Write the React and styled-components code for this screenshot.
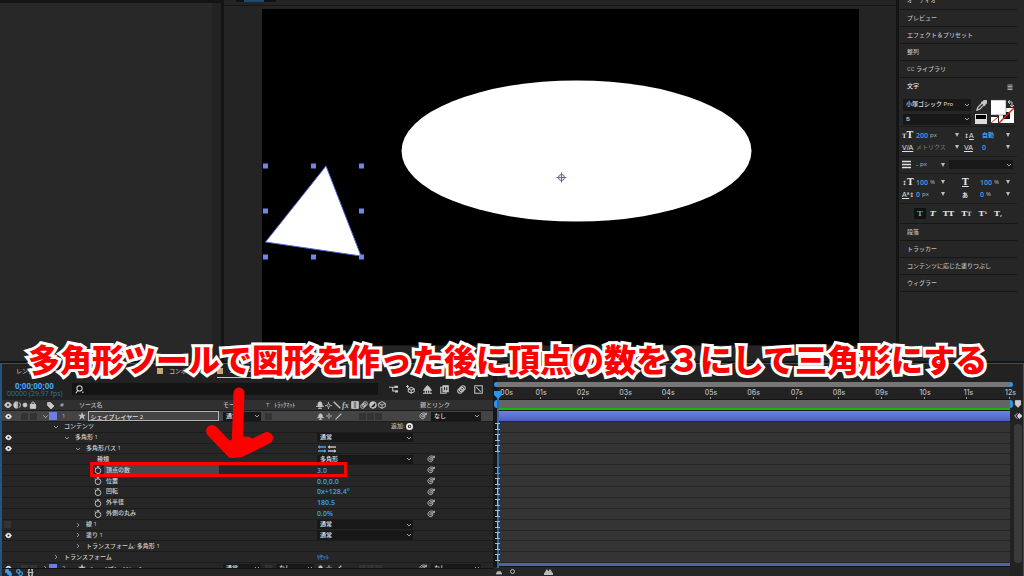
import React from "react"
import styled, { createGlobalStyle } from "styled-components"

const colors = {
  bg: "#141414",
  panel: "#262626",
  panelDark: "#222222",
  field: "#181818",
  line: "#161616",
  text: "#bcbcbc",
  bright: "#e0e0e0",
  dim: "#6c6c6c",
  blue: "#3fa0ec",
  frame: "#27547f",
  red: "#ff0000"
}

const GlobalStyle = createGlobalStyle`
  * {
    box-sizing: border-box;
  }
  body {
    margin: 0;
    background: ${colors.bg};
    color: ${colors.text};
    font-family: "Open Sans", "Noto Sans CJK JP", sans-serif;
    font-size: 6px;
    font-weight: 500;
    line-height: 9px;
    overflow: hidden;
  }
  button,
  input,
  select {
    margin: 0;
    padding: 0;
    border: 0;
    border-radius: 0;
    background: none;
    color: inherit;
    font: inherit;
  }
  svg {
    display: block;
    flex: none;
  }
`

const App = styled.div`
  position: relative;
  display: flex;
  flex-direction: column;
  height: 100vh;
  overflow: hidden;
`

const Workspace = styled.main`
  display: flex;
  flex: 1;
  min-height: 0;
  gap: 3px;
  padding-bottom: 2px;
`

/* ---------- icons ---------- */

const paths = {
  eye: (
    <>
      <path d="M1 6c2-5 8-5 10 0-2 5-8 5-10 0z" fill="currentColor" />
      <circle cx="6" cy="6" r="2.2" fill="#1c1c1c" />
    </>
  ),
  audio: (
    <>
      <path d="M5 1v10C0 10 0 2 5 1z" fill="currentColor" />
      <path d="M7 1v10M9 2c3 2 3 6 0 8" />
    </>
  ),
  dot: <circle cx="6" cy="6" r="4" fill="currentColor" />,
  lock: (
    <>
      <path d="M2 5h8v6H2z" fill="currentColor" />
      <path d="M4 5V3c0-2 4-2 4 0v2" />
    </>
  ),
  tag: (
    <>
      <path d="M1 1h5l6 6-5 5-6-6z" fill="currentColor" />
      <circle cx="3.5" cy="3.5" r="1" fill="#222" />
    </>
  ),
  star: (
    <path
      d="M6 0l1.700 4H12L8.600 6.700 10 11.500 6 8.600 2 11.500 3.400 6.700 0 4h4.300z"
      fill="currentColor"
      stroke="none"
    />
  ),
  down: <path d="M2 4l4 4 4-4" />,
  right: <path d="M4 2l4 4-4 4" />,
  triangle: <path d="M2 2h8L6 10z" fill="currentColor" stroke="none" />,
  stopwatch: (
    <>
      <circle cx="6" cy="7" r="4.300" />
      <path d="M4 1h4M6 1v2M1 2l2 2" />
    </>
  ),
  spiral: (
    <path d="M6 6c1-1 2 1 .5 1.500C4 8 3 5 5.500 4 9 3 10 8 7 9.700 3 11 0 7 2 4c2-3 7-3.500 9-.5M11 1v3H8" />
  ),
  shy: (
    <>
      <path d="M3 8V5c0-5 6-5 6 0v3z" fill="currentColor" />
      <path d="M0 8h12M6 8v4M3 11h6" />
    </>
  ),
  sun: (
    <>
      <circle cx="6" cy="6" r="2.500" />
      <path d="M6 0v3M6 9v3M0 6h3M9 6h3" />
    </>
  ),
  back: <path d="M1 1l10 10" strokeWidth="2" />,
  slash: <path d="M1 11L11 1" strokeWidth="2" />,
  film: (
    <>
      <path d="M1 1h10v10H1z" fill="currentColor" />
      <path d="M4 3h4M4 9h4M4 6h4" stroke="#333" />
    </>
  ),
  blur: (
    <>
      <circle cx="4" cy="8" r="3" />
      <circle cx="6" cy="6" r="3" />
      <circle cx="8" cy="4" r="3" />
    </>
  ),
  half: (
    <>
      <circle cx="6" cy="6" r="5" fill="currentColor" />
      <path d="M3 9l6-6c2 3-2 8-6 6z" fill="#222" stroke="none" />
    </>
  ),
  cube: <path d="M6 1l5 2.500v5L6 11 1 8.500v-5zM1 3.500L6 6l5-2.500M6 6v5" />,
  flow: (
    <>
      <path d="M0 3h7M5 3v5h3" />
      <path d="M7 1h5v3H7zM8 7h4v3H8z" fill="currentColor" stroke="none" />
    </>
  ),
  draft: (
    <>
      <path d="M0 2h4M2 0v4" />
      <path d="M7 3l4 2v4l-4 2-4-2V5zM3 5l4 2 4-2M7 7v4" />
    </>
  ),
  hide: (
    <>
      <path d="M0 11h12M1 7h10L9 4 6 1 3 4z" fill="currentColor" />
      <path d="M3 7v4M6 7v4M9 7v4" />
    </>
  ),
  frames: (
    <>
      <path d="M1 3h7v8H1z" />
      <path d="M4 1h7v8H4z" fill="currentColor" />
      <path d="M6 3v4M9 3v4" stroke="#222" />
    </>
  ),
  graph: <path d="M1 1h10v10H1zM3 3l6 6" />,
  plus: (
    <>
      <circle cx="6" cy="6" r="4.500" fill="#222" strokeWidth="3" />
      <path d="M5 4l3 2-3 2z" fill="currentColor" stroke="none" />
    </>
  ),
  search: (
    <>
      <circle cx="6" cy="4.500" r="3.500" />
      <path d="M4 7l-3 4" />
      <path d="M9 9h3l-1.500 2z" fill="currentColor" stroke="none" />
    </>
  ),
  direction: (
    <>
      <path d="M0 3h12M0 9h12" strokeWidth="2" />
      <path d="M3 0v6L0 3zM9 6v6l3-3z" fill="currentColor" stroke="none" />
    </>
  ),
  marker: <path d="M2 1h8v6l-4 4-4-4z" fill="currentColor" />,
  diamond: (
    <>
      <path d="M5 2L1 6l4 4" />
      <path d="M8 2l4 4-4 4-3-4z" fill="currentColor" />
    </>
  ),
  layers: <path d="M1 1h5v5H1zM4 4h5v5H4zM7 7h4v4H7z" fill="currentColor" />,
  links: (
    <>
      <circle cx="4" cy="4" r="3" strokeWidth="2" />
      <circle cx="8" cy="8" r="3" strokeWidth="2" />
    </>
  ),
  braces: <path d="M5 1H3v10h2M7 1h2v10H7M1 6h10" strokeWidth="2" />,
  mountain: <path d="M0 10l4-6 2 3 2-3 4 6z" fill="currentColor" />,
  menu: <path d="M1 2h10M1 5h10M1 8h10M1 11h10" />,
  lines: <path d="M0 2h12M0 6h12M0 10h12" strokeWidth="2" />,
  dropper: (
    <>
      <path d="M1 11l1-3 5-5 2 2-5 5z" />
      <path d="M6 2l4 4M7 3l3-3 2 2-3 3z" fill="currentColor" strokeWidth="2" />
    </>
  )
}

function Icon({ name, size = 8, color }) {
  return (
    <svg
      width={size}
      height={size}
      viewBox="0 0 12 12"
      fill="none"
      stroke="currentColor"
      strokeWidth="1.4"
      color={color}
      aria-hidden="true"
    >
      {paths[name]}
    </svg>
  )
}

/* ---------- shared controls ---------- */

const IconButton = styled.button`
  display: flex;
  align-items: center;
  justify-content: center;
  width: ${({ $width }) => $width || 8}px;
  height: ${({ $height }) => $height || 8}px;
  color: ${({ $color }) => $color || "#c4c4c4"};
`

const SelectBox = styled.span`
  position: relative;
  display: flex;
  align-items: center;
  flex: ${({ $width }) => ($width ? "none" : 1)};
  width: ${({ $width }) => ($width ? `${$width}px` : "auto")};
  min-width: 0;
  height: ${({ $tall }) => ($tall ? 11 : 9)}px;
  background: ${colors.field};
  color: ${colors.bright};
  font-weight: 500;
  select {
    width: 100%;
    height: 100%;
    padding-left: 3px;
    appearance: none;
  }
  svg {
    position: absolute;
    right: 1px;
    pointer-events: none;
  }
`

function Select({ label, value, ...rest }) {
  return (
    <SelectBox {...rest}>
      <select aria-label={label} defaultValue={value}>
        <option>{value}</option>
      </select>
      <Icon name="down" size={6} />
    </SelectBox>
  )
}

const Value = styled.input`
  width: ${({ $width }) => $width}px;
  height: 9px;
  color: ${({ $dim }) => ($dim ? colors.dim : colors.blue)};
  font-size: ${({ $jp }) => ($jp ? 6 : 7)}px;
  font-weight: ${({ $dim }) => ($dim ? 500 : 600)};
`

/* ---------- upper left and viewer ---------- */

const ProjectPanel = styled.section`
  flex: 0 0 221px;
  margin-top: 3px;
  border-right: 9px solid #232323;
  background: #282828;
`

const Viewer = styled.section`
  display: flex;
  flex: 1;
  flex-direction: column;
  min-width: 0;
  background: #242424;
`

const ViewerTabs = styled.div`
  height: 6px;
  padding-left: 12px;
  border-bottom: 1px solid ${colors.line};
`

const ViewerTab = styled.div`
  width: 40px;
  height: 2px;
  background: linear-gradient(90deg, #111 20%, #1c4a6e 20%, #1c4a6e 70%, #111 70%);
`

const Stage = styled.div`
  display: flex;
  flex: 1;
  align-items: flex-start;
  justify-content: center;
  padding: 3px 0 0 1px;
  border-bottom: 1px solid ${colors.line};
  svg {
    background: #000;
  }
`

const ViewerFooter = styled.div`
  height: 15px;
`

const handles = [3.5, 51.5, 99.5].flatMap(x =>
  [157, 202, 248].filter(y => !(x === 51.5 && y === 202)).map(y => [x, y])
)

function Composition() {
  return (
    <Stage>
      <svg width="597" height="336" viewBox="0 0 597 336" role="img" aria-label="コンポジション">
        <ellipse cx="314.500" cy="142" rx="175" ry="70.500" fill="#fff" />
        <path d="M64 157L3.500 233 99 247z" fill="#fff" stroke="#5468d8" />
        {handles.map(([x, y]) => (
          <rect key={`${x}-${y}`} x={x - 2.5} y={y - 2.5} width="5" height="5" fill="#6f86ee" />
        ))}
        <g stroke="#5a639c" fill="none">
          <circle cx="299.500" cy="168.500" r="3" />
          <path d="M299.500 163.500v10M294.500 168.500h10" />
        </g>
      </svg>
    </Stage>
  )
}

/* ---------- right side panels ---------- */

const SidePanels = styled.aside`
  flex: 0 0 125px;
  padding: 0 7px 0 1px;
  background: ${colors.panel};
`

const PanelHeader = styled.button`
  display: flex;
  align-items: ${({ $cut }) => ($cut ? "flex-end" : "center")};
  justify-content: space-between;
  width: 100%;
  height: ${({ $cut }) => ($cut ? 10 : 17)}px;
  padding: ${({ $cut }) => ($cut ? "0 4px 4px 7px" : "0 4px 0 7px")};
  border-bottom: ${({ $open }) => ($open ? 0 : 1)}px solid ${colors.line};
  color: ${({ $open }) => ($open ? colors.bright : colors.text)};
`

const CharacterPanel = styled.div`
  border-bottom: 1px solid ${colors.line};
`

const FontBlock = styled.div`
  display: grid;
  grid-template-columns: 68px 12px 26px;
  column-gap: 4px;
  padding: 4px 0 1px 3px;
`

const Stack = styled.div`
  display: flex;
  flex-direction: column;
  gap: 3px;
`

const Group = styled.div`
  padding: 2px 4px 3px 2px;
  border-top: 1px solid #1b1b1b;
`

const CharRow = styled.div`
  display: grid;
  grid-template-columns: 14px ${({ $near }) => ($near ? "24px 22px" : "38px 10px")} 18px 1fr 8px;
  align-items: center;
  height: 12px;
`

const Field = styled.label`
  display: flex;
  align-items: center;
  gap: 1px;
  font-size: 6px;
`

const Glyph = styled.span`
  color: ${colors.bright};
  font-family: "DejaVu Serif", "Noto Sans CJK JP", serif;
  font-size: 9px;
  font-weight: bold;
  line-height: 11px;
  white-space: nowrap;
  small {
    font-size: 6px;
  }
  sub {
    font: 7px/6px "Liberation Sans", sans-serif;
    text-decoration: underline;
    vertical-align: baseline;
  }
  u {
    text-underline-offset: 1px;
  }
`

const StrokeRow = styled.div`
  display: grid;
  grid-template-columns: 14px 24px 9px 1fr;
  align-items: center;
  height: 11px;
`

const StyleRow = styled.div`
  display: flex;
  align-items: center;
  justify-content: space-between;
  height: 14px;
  padding: 0 8px 0 12px;
`

const StyleButton = styled.button`
  height: 11px;
  padding: 0 3px;
  background: ${({ $on }) => ($on ? "#111" : "none")};
  color: ${({ $on }) => ($on ? colors.blue : colors.bright)};
  font: bold 8px/11px "DejaVu Serif", serif;
  font-style: ${({ $italic }) => ($italic ? "italic" : "normal")};
  small {
    font-size: 6px;
  }
`

const characterRows = [
  [
    { icon: <><small>T</small>T</>, value: "200", unit: "px", label: "フォントサイズ", width: 13 },
    { icon: <><small>↕</small><sub>A</sub></>, value: "自動", label: "行送り", width: 16, jp: true }
  ],
  [
    { icon: <sub>V/A</sub>, value: "メトリクス", label: "カーニング", width: 34, dim: true, jp: true },
    { icon: <sub>VA</sub>, value: "0", label: "トラッキング", width: 12 }
  ]
]

const scaleRows = [
  [
    { icon: <><small>↕</small>T</>, value: "100", unit: "%", label: "垂直比率", width: 13 },
    { icon: <u>T</u>, value: "100", unit: "%", label: "水平比率", width: 13 }
  ],
  [
    { icon: <><sub>Aª</sub><small>↕</small></>, value: "0", unit: "px", label: "ベースラインシフト", width: 5 },
    { icon: <small>あ</small>, value: "0", unit: "%", label: "文字詰め", width: 5 }
  ]
]

function CharacterRow({ items, near }) {
  return (
    <CharRow $near={near}>
      {items.map(item => (
        <React.Fragment key={item.label}>
          <Glyph>{item.icon}</Glyph>
          <Field>
            <Value
              aria-label={item.label}
              defaultValue={item.value}
              $width={item.width}
              $dim={item.dim}
              $jp={item.jp}
            />
            {item.unit}
          </Field>
          <Icon name="triangle" size={6} />
        </React.Fragment>
      ))}
    </CharRow>
  )
}

function Character() {
  return (
    <CharacterPanel>
      <PanelHeader $open>
        文字
        <Icon name="menu" size={6} />
      </PanelHeader>
      <FontBlock>
        <Stack>
          <Select $tall label="フォント" value="小塚ゴシック Pro" />
          <Select $tall label="スタイル" value="B" />
        </Stack>
        <Stack>
          <IconButton aria-label="スポイト" $width={12} $height={12}>
            <Icon name="dropper" size={11} />
          </IconButton>
          <svg width="12" height="10" viewBox="0 0 12 10">
            <path d="M0 0h12v10H0z" fill="#ddd" />
            <path d="M1 1h10v4H1z" fill="#000" />
          </svg>
        </Stack>
        <svg width="26" height="26" viewBox="2 0 26 26" aria-label="塗りと線">
          <path d="M10 9h15v15H10z" fill="#fff" />
          <path d="M14 13h7v7h-7z" fill="#111" />
          <path d="M10 24L25 9" stroke="#d22" strokeWidth="1.500" />
          <path d="M1 1h16v15H1z" fill="#fff" stroke="#444" strokeWidth=".5" />
          <path d="M2 18h7v6H2z" fill="#fff" />
          <path d="M2 24l7-6" stroke="#d22" />
          <path d="M19 3h4v5M21 1l-2 2 2 2M21 6l2 2 2-2" fill="none" stroke="#ccc" />
        </svg>
      </FontBlock>
      <Group>
        {characterRows.map((items, i) => (
          <CharacterRow key={i} items={items} />
        ))}
      </Group>
      <Group>
        <StrokeRow>
          <Icon name="lines" size={9} color={colors.bright} />
          <Field>
            <Value aria-label="線幅" defaultValue="-" $width={3} />
            px
          </Field>
          <Icon name="triangle" size={6} />
          <Select label="線の重なり" value="" />
        </StrokeRow>
      </Group>
      <Group>
        {scaleRows.map((items, i) => (
          <CharacterRow key={i} items={items} near />
        ))}
      </Group>
      <Group>
        <StyleRow>
          <StyleButton $on>T</StyleButton>
          <StyleButton $italic>T</StyleButton>
          <StyleButton>TT</StyleButton>
          <StyleButton>T<small>T</small></StyleButton>
          <StyleButton>T<small>¹</small></StyleButton>
          <StyleButton>T<small>,</small></StyleButton>
        </StyleRow>
      </Group>
    </CharacterPanel>
  )
}

/* ---------- timeline ---------- */

const Timeline = styled.section`
  display: flex;
  flex: 0 0 213px;
  min-height: 0;
  border: 1px solid ${colors.frame};
  border-left-width: 2px;
  border-bottom: 0;
  background: ${colors.panelDark};
`

const LayerSide = styled.div`
  display: flex;
  flex: 0 0 491px;
  flex-direction: column;
  min-height: 0;
`

const Tabs = styled.div`
  display: flex;
  flex: 0 0 14px;
  align-items: center;
  gap: 8px;
  padding-left: 14px;
`

const Tab = styled.button`
  display: flex;
  align-items: center;
  gap: 6px;
  width: ${({ $width }) => $width}px;
  height: 14px;
  border-bottom: ${({ $active }) => ($active ? 1 : 0)}px solid #c4c4c4;
  white-space: nowrap;
  overflow: hidden;
  &::before {
    content: "";
    flex: none;
    width: 6px;
    height: 6px;
    background: #c2a878;
    display: ${({ $plain }) => ($plain ? "none" : "block")};
  }
`

const Toolbar = styled.div`
  display: flex;
  flex: 0 0 22px;
  align-items: center;
  padding-left: 5px;
`

const Timecode = styled.div`
  flex: 0 0 65px;
  color: #2772ac;
  font-size: 7px;
  line-height: 8px;
  white-space: nowrap;
  strong {
    display: block;
    padding-left: 8px;
    color: #3fa5f5;
    font-size: 8px;
    line-height: 9px;
  }
`

const Search = styled.label`
  display: flex;
  flex: 0 0 306px;
  align-items: center;
  height: 12px;
  padding-left: 3px;
  background: #141414;
  color: #d0d0d0;
  input {
    flex: 1;
  }
`

const Tools = styled.div`
  display: flex;
  flex: 1;
  justify-content: space-between;
  padding: 0 9px 0 10px;
`

const RowGrid = styled.div`
  display: grid;
  grid-template-columns: 36px 184px 94px 100px 1fr;
  align-items: center;
  min-height: 0;
`

const HeaderRow = styled(RowGrid)`
  flex: 0 0 11px;
  border-bottom: 1px solid #1c1c1c;
  background: #303030;
  white-space: nowrap;
`

const Row = styled(RowGrid)`
  border-bottom: 1px solid #1c1c1c;
  background: ${({ $layer }) => ($layer ? "#444444" : colors.panel)};
`

const Cell = styled.div`
  display: flex;
  align-items: center;
  height: 100%;
  gap: ${({ $gap }) => $gap || 0}px;
  padding-left: ${({ $indent }) => $indent || 0}px;
  white-space: nowrap;
`

const RowsView = styled.div`
  flex: 1;
  min-height: 0;
  overflow: visible clip;
`

/* both sides of the timeline share the same row rhythm */
const Rows = styled.div`
  display: grid;
  grid-template-rows: repeat(15, 1fr);
  height: 163px;
`

const Box = styled.span`
  width: 7px;
  height: 7px;
  background: #333333;
`

const Swatch = styled.span`
  width: 8px;
  height: 8px;
  background: #6b7fe0;
`

const Spacer = styled.span`
  width: ${({ $width }) => $width}px;
`

const LayerName = styled.input`
  width: ${({ $plain }) => ($plain ? 120 : 131)}px;
  height: 10px;
  padding-left: 1px;
  border: ${({ $plain }) => ($plain ? 0 : 1)}px solid #b4b4b4;
  color: ${colors.bright};
`

const Name = styled.span`
  display: flex;
  align-items: center;
  flex: 1;
  height: 100%;
  margin-right: 3px;
  padding-left: 2px;
  background: ${({ $selected }) => ($selected ? "#484848" : "none")};
  color: #d0d0d0;
`

const ResetLink = styled.a`
  color: ${colors.blue};
  font-size: 6px;
  text-decoration: none;
`

const BottomBar = styled.div`
  display: flex;
  flex: 0 0 8px;
  align-items: center;
  gap: 3px;
  padding-left: 2px;
  border-top: 1px solid #111;
  background: #262626;
`

const properties = [
  { name: "コンテンツ", indent: 14, icon: "down", add: true },
  { name: "多角形 1", indent: 25, icon: "down", eye: true, select: "通常" },
  { name: "多角形パス 1", indent: 36, icon: "down", eye: true, direction: true },
  { name: "種類", indent: 47, select: "多角形", link: true },
  { name: "頂点の数", indent: 56, icon: "stopwatch", value: "3.0", link: true, selected: true },
  { name: "位置", indent: 56, icon: "stopwatch", value: "0.0,0.0", link: true },
  { name: "回転", indent: 56, icon: "stopwatch", value: "0x+128.4°", link: true },
  { name: "外半径", indent: 56, icon: "stopwatch", value: "180.5", link: true },
  { name: "外側の丸み", indent: 56, icon: "stopwatch", value: "0.0%", link: true },
  { name: "線 1", indent: 36, icon: "right", hidden: true, select: "通常" },
  { name: "塗り 1", indent: 36, icon: "right", eye: true, select: "通常" },
  { name: "トランスフォーム: 多角形 1", indent: 36, icon: "right" },
  { name: "トランスフォーム", indent: 14, icon: "right", reset: true }
]

function LayerRow({ number, name, open }) {
  return (
    <Row $layer={open}>
      <Cell $gap={2} $indent={2}>
        <IconButton aria-label="表示" $color="#eee"><Icon name="eye" size={7} /></IconButton>
        <Spacer $width={5} />
        <Box />
        <Box />
      </Cell>
      <Cell $indent={3}>
        <IconButton aria-label="展開"><Icon name={open ? "down" : "right"} size={7} /></IconButton>
        <Swatch />
        <Spacer $width={5} />
        {number}
        <Spacer $width={13} />
        <Icon name="star" />
        <Spacer $width={2} />
        <LayerName aria-label="レイヤー名" defaultValue={name} $plain={!open} />
      </Cell>
      <Cell $indent={1} $gap={4}>
        <Select $width={38} label="モード" value="通常" />
        <Box />
        {!open && <Select $width={38} label="トラックマット" value="なし" />}
      </Cell>
      <Cell $gap={1}>
        <IconButton aria-label="シャイ"><Icon name="shy" size={7} /></IconButton>
        <IconButton aria-label="コラップス"><Icon name="sun" size={6} /></IconButton>
        <IconButton aria-label="画質"><Icon name="slash" size={7} /></IconButton>
        <Spacer $width={15} />
        <Box />
        <Box />
        <Box />
      </Cell>
      <Cell $indent={3} $gap={4}>
        <IconButton aria-label="ピックウイップ"><Icon name="spiral" /></IconButton>
        <Select $width={50} label="親とリンク" value="なし" />
      </Cell>
    </Row>
  )
}

function PropertyRow({ item }) {
  return (
    <Row>
      <Cell $indent={2}>
        {item.eye && <IconButton aria-label="表示" $color="#eee"><Icon name="eye" size={7} /></IconButton>}
        {item.hidden && <Box />}
      </Cell>
      <Cell $indent={item.indent} $gap={2}>
        {item.icon ? (
          <IconButton aria-label={item.name}>
            <Icon name={item.icon} size={item.icon === "stopwatch" ? 8 : 6} />
          </IconButton>
        ) : (
          <Spacer $width={8} />
        )}
        <Name $selected={item.selected}>{item.name}</Name>
      </Cell>
      <Cell />
      <Cell $indent={1}>
        {item.select && <Select $width={96} label={item.name} value={item.select} />}
        {item.value && <Value aria-label={item.name} defaultValue={item.value} $width={60} />}
        {item.reset && <ResetLink href="#reset">ﾘｾｯﾄ</ResetLink>}
        {item.direction && (
          <>
            <IconButton aria-label="パスの方向" $width={10} $color={colors.blue}><Icon name="direction" /></IconButton>
            <IconButton aria-label="逆方向" $width={10}><Icon name="direction" /></IconButton>
          </>
        )}
        {item.add && (
          <>
            <Spacer $width={74} />
            追加:
            <IconButton aria-label="追加" $width={10} $color="#eee"><Icon name="plus" size={7} /></IconButton>
          </>
        )}
      </Cell>
      <Cell $indent={11}>
        {item.link && <IconButton aria-label="リンク"><Icon name="spiral" /></IconButton>}
      </Cell>
    </Row>
  )
}

const TimeSide = styled.div`
  position: relative;
  display: flex;
  flex: 1;
  flex-direction: column;
  min-width: 0;
  min-height: 0;
  padding-left: 5px;
  background:
    linear-gradient(90deg, #161616 4px, transparent 4px),
    ${colors.panelDark};
`

const Navigator = styled.div`
  flex: none;
  height: ${({ $thick }) => ($thick ? 8 : 5)}px;
  margin: ${({ $thick }) => ($thick ? "0 -3px 0 -4px" : "18px -3px 0 -4px")};
  border: 3px solid #2f93e8;
  border-width: 0 3px;
  border-radius: 3px;
  background: ${({ $thick }) => ($thick ? "#646464" : "#777575")};
`

const Ruler = styled.div`
  display: grid;
  grid-template-columns: repeat(12, 1fr);
  flex: 0 0 13px;
  border-bottom: 1px solid #111;
  font-family: Inter, sans-serif;
  font-size: 7px;
`

const Second = styled.span`
  position: relative;
  padding-top: 1px;
  border-right: 1px solid transparent;
  span {
    position: absolute;
    right: -7px;
  }
  &::after {
    content: "";
    position: absolute;
    right: -1px;
    bottom: 0;
    width: 1px;
    height: 2px;
    background: #999;
  }
`

const FirstSecond = styled.b`
  font-weight: 500;
`

const CacheBar = styled.div`
  flex: 0 0 3px;
  border-bottom: 1px solid #1c1c1c;
  background: #12b812;
`

const Track = styled.div`
  display: flex;
  align-items: center;
  border-bottom: 1px solid #272727;
  background: ${({ $bar, $muted }) =>
    $muted ? "#5561a0" : $bar ? "linear-gradient(#7383dc, #4760c6)" : "#343434"};
`

const Beam = styled.span`
  z-index: 1;
  width: 5px;
  height: 7px;
  margin-left: -3px;
  border: 1px solid ${({ $active }) => ($active ? colors.blue : "#b0b8c0")};
  border-width: 1px 0;
  background: linear-gradient(
    90deg,
    transparent 2px,
    ${({ $active }) => ($active ? colors.blue : "#b0b8c0")} 2px,
    ${({ $active }) => ($active ? colors.blue : "#b0b8c0")} 3px,
    transparent 3px
  );
`

const Playhead = styled.div`
  position: absolute;
  top: 27px;
  bottom: 8px;
  left: 4px;
  width: 2px;
  background: #2a6aa6;
  svg {
    margin-left: -3px;
  }
`

const ZoomBar = styled(BottomBar)`
  margin-left: -5px;
  padding-left: 3px;
  gap: 1px;
  input {
    width: 40px;
    height: 6px;
    appearance: none;
  }
  input::-webkit-slider-thumb {
    appearance: none;
    width: 5px;
    height: 5px;
    border: 1px solid #bbb;
    border-radius: 50%;
  }
`

const ScrollColumn = styled.div`
  display: flex;
  flex: 0 0 13px;
  flex-direction: column;
  align-items: flex-end;
  gap: 4px;
  padding: 36px 1px 13px 0;
  background: ${colors.panelDark};
  color: #cccccc;
`

const Thumb = styled.div`
  flex: 1;
  width: 8px;
  border-radius: 4px;
  background: #3a3a3a;
`

const seconds = ["01s", "02s", "03s", "04s", "05s", "06s", "07s", "08s", "09s", "10s", "11s", "12s"]

function TimeGraph() {
  return (
    <TimeSide>
      <Navigator />
      <Ruler>
        {seconds.map((label, i) => (
          <Second key={label}>
            {i === 0 && <FirstSecond>:00s</FirstSecond>}
            <span>{label}</span>
          </Second>
        ))}
      </Ruler>
      <Navigator $thick />
      <CacheBar />
      <RowsView>
        <Rows>
          <Track $bar />
          {properties.map(item => (
            <Track key={item.name}>
              {item.name !== "種類" && <Beam $active={item.selected} />}
            </Track>
          ))}
          <Track $muted />
        </Rows>
      </RowsView>
      <ZoomBar>
        <Icon name="mountain" size={6} />
        <input type="range" aria-label="ズーム" min="0" max="100" defaultValue="20" />
        <Icon name="mountain" size={9} />
      </ZoomBar>
      <Playhead>
        <svg width="8" height="8" viewBox="0 0 8 8">
          <path d="M0 0h8v4L4 8 0 4z" fill="#2f93e8" />
        </svg>
      </Playhead>
    </TimeSide>
  )
}

const switchIcons = ["shy", "sun", "back", "fx", "film", "blur", "half", "cube"]

const Fx = styled.i`
  width: 8px;
  font: italic bold 8px/9px "Liberation Serif", serif;
`

function Layers() {
  return (
    <LayerSide>
      <Tabs>
        <Tab $plain $width={133}>レンダーキュー</Tab>
        <Tab $width={52}>コンポ 1</Tab>
        <Tab $width={46} $active>コンポ 2</Tab>
      </Tabs>
      <Toolbar>
        <Timecode>
          <strong>0;00;00;00</strong>
          00000 (29.97 fps)
        </Timecode>
        <Search>
          <Icon name="search" size={9} />
          <input type="search" aria-label="検索" />
        </Search>
        <Tools>
          {["flow", "draft", "hide", "frames", "blur", "graph"].map(name => (
            <IconButton key={name} aria-label={name} $width={10} $height={10}>
              <Icon name={name} size={9} />
            </IconButton>
          ))}
        </Tools>
      </Toolbar>
      <HeaderRow>
        <Cell $indent={2} $gap={1}>
          {["eye", "audio", "dot", "lock"].map(name => (
            <Icon key={name} name={name} size={name === "dot" ? 6 : 8} color="#ccc" />
          ))}
        </Cell>
        <Cell $indent={9}>
          <Icon name="tag" size={7} color="#ccc" />
          <Spacer $width={6} />
          #
          <Spacer $width={15} />
          ソース名
        </Cell>
        <Cell $indent={1}>
          モード
          <Spacer $width={25} />
          T
          <Spacer $width={5} />
          ﾄﾗｯｸﾏｯﾄ
        </Cell>
        <Cell $gap={1}>
          {switchIcons.map(name =>
            name === "fx" ? <Fx key={name}>fx</Fx> : <Icon key={name} name={name} size={name === "sun" ? 7 : 8} color="#c4c4c4" />
          )}
        </Cell>
        <Cell $indent={4}>親とリンク</Cell>
      </HeaderRow>
      <RowsView>
        <Rows>
          <LayerRow open number="1" name="シェイプレイヤー 2" />
          {properties.map(item => (
            <PropertyRow key={item.name} item={item} />
          ))}
          <LayerRow number="2" name="シェイプレイヤー 1" />
        </Rows>
      </RowsView>
      <BottomBar>
        <IconButton aria-label="レイヤースイッチ" $height={6} $color={colors.blue}><Icon name="layers" size={7} /></IconButton>
        <IconButton aria-label="転送制御" $height={6} $color={colors.blue}><Icon name="links" size={7} /></IconButton>
        <IconButton aria-label="イン/アウト" $height={6}><Icon name="braces" size={7} /></IconButton>
      </BottomBar>
    </LayerSide>
  )
}

/* ---------- annotations over the app ---------- */

const Caption = styled.p`
  position: absolute;
  z-index: 2;
  bottom: 196px;
  left: 28px;
  margin: 0;
  color: ${colors.red};
  font-family: "Noto Sans CJK JP", sans-serif;
  font-size: 32px;
  font-weight: 900;
  line-height: 44px;
  white-space: nowrap;
  paint-order: stroke fill;
  -webkit-text-stroke: 6px #fff;
  stroke-linejoin: round;
`

const Highlight = styled.div`
  position: absolute;
  bottom: 99px;
  left: 90px;
  width: 257px;
  height: 15px;
  border: 3px solid ${colors.red};
`

const Arrow = styled.svg`
  position: absolute;
  bottom: 114px;
  left: 202px;
`

export default function AfterEffects() {
  return (
    <App>
      <GlobalStyle />
      <Workspace>
        <ProjectPanel />
        <Viewer>
          <ViewerTabs>
            <ViewerTab />
          </ViewerTabs>
          <Composition />
          <ViewerFooter />
        </Viewer>
        <SidePanels>
          <PanelHeader $cut>オーディオ</PanelHeader>
          <PanelHeader>プレビュー</PanelHeader>
          <PanelHeader>エフェクト＆プリセット</PanelHeader>
          <PanelHeader>整列</PanelHeader>
          <PanelHeader>CC ライブラリ</PanelHeader>
          <Character />
          <PanelHeader>段落</PanelHeader>
          <PanelHeader>トラッカー</PanelHeader>
          <PanelHeader>コンテンツに応じた塗りつぶし</PanelHeader>
          <PanelHeader>ウィグラー</PanelHeader>
        </SidePanels>
      </Workspace>
      <Timeline>
        <Layers />
        <TimeGraph />
        <ScrollColumn>
          <Icon name="marker" />
          <Icon name="diamond" />
          <Thumb />
        </ScrollColumn>
      </Timeline>
      <Arrow width="76" height="78" viewBox="0 0 76 78" aria-hidden="true">
        <g
          fill="none"
          stroke={colors.red}
          strokeWidth="12"
          strokeLinecap="round"
          strokeLinejoin="round"
        >
          <path d="M37 9L35 66" strokeWidth="11" />
          <path d="M10 47l20 21 9-1 26-13" />
          <path d="M28 65l8-7 10 1-10 7z" fill={colors.red} />
        </g>
      </Arrow>
      <Highlight />
      <Caption>多角形ツールで図形を作った後に頂点の数を３にして三角形にする</Caption>
    </App>
  )
}
